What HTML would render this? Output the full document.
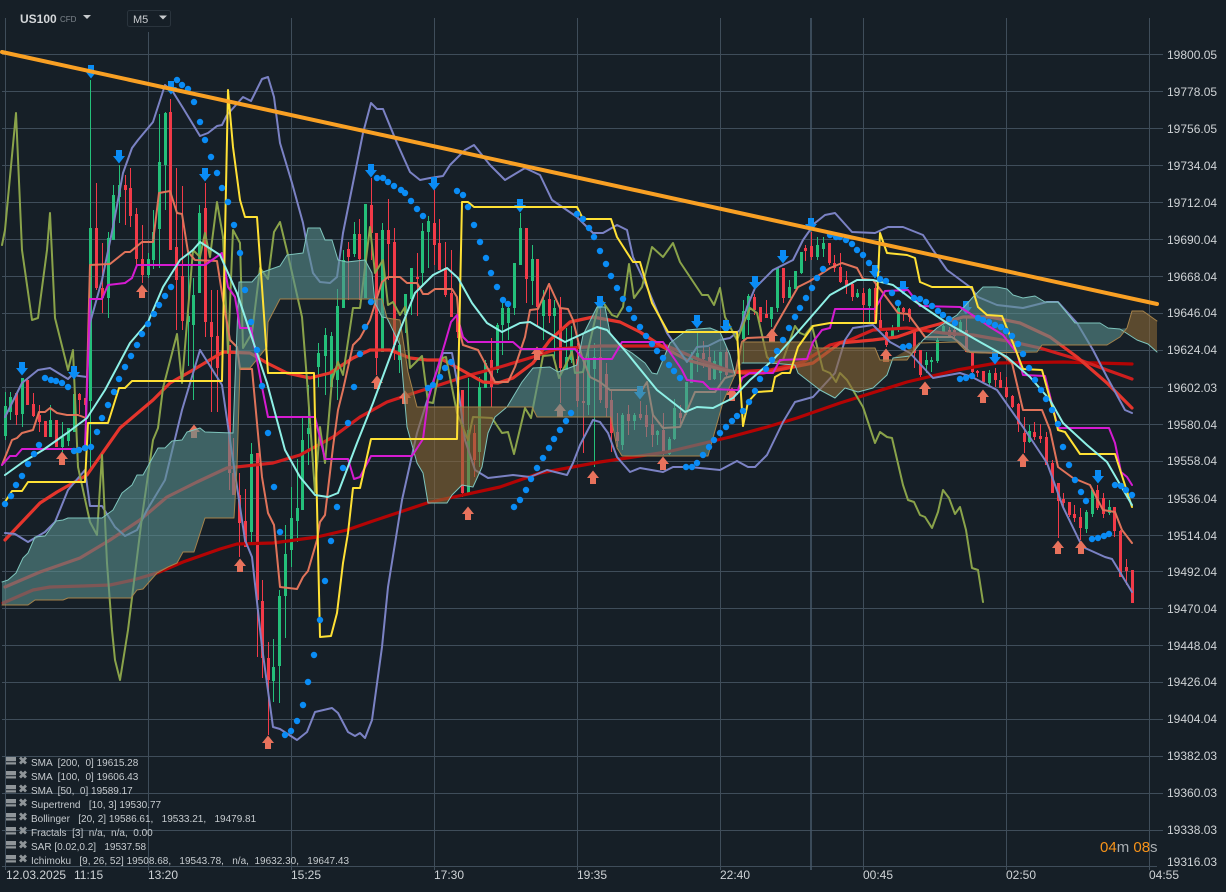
<!DOCTYPE html>
<html><head><meta charset="utf-8"><title>US100</title>
<style>
html,body{margin:0;padding:0;background:#161f27;width:1226px;height:892px;overflow:hidden}
svg{display:block;font-family:"Liberation Sans",sans-serif}
text{white-space:pre}
.l{fill:none;stroke-linejoin:round;stroke-linecap:round}
.ax{font-size:12px;fill:#cfd3d6}
.lg{font-size:10px;fill:#c6cbcf}
</style></head><body>
<svg width="1226" height="892" viewBox="0 0 1226 892" xmlns="http://www.w3.org/2000/svg">
<defs>
<path id="dn" d="M-3 -7h6v6h3l-6 7.500-6-7.500h3z" fill="#0a8cf5"/>
<path id="up" d="M-3 7h6v-6h3l-6-7.500-6 7.500h3z" fill="#e8725c"/>
<g id="ic"><path d="M6 0h10v4.200h-10zM6 5.200h10v2.300h-10z" fill="#8f9599"/><path d="M20 0.500l6 6M26 0.500l-6 6" stroke="#8f9599" stroke-width="2.800" fill="none"/></g>
</defs>
<rect width="1226" height="892" fill="#161f27"/>
<!-- grid -->
<path fill="none" stroke="#3f4d5a" stroke-width="1" d="M2 54.500H1163M2 91.500H1163M2 128.500H1163M2 165.500H1163M2 202.500H1163M2 239.500H1163M2 276.500H1163M2 313.500H1163M2 350.500H1163M2 387.500H1163M2 424.500H1163M2 461.500H1163M2 498.500H1163M2 535.500H1163M2 571.500H1163M2 608.500H1163M2 645.500H1163M2 682.500H1163M2 719.500H1163M2 756.500H1163M2 793.500H1163M2 830.500H1163M2 866.500H1157M5.500 18V870M148.500 32V870M291.500 18V870M434.500 18V870M577.500 18V870M720.500 18V870M863.500 18V870M1006.500 18V870M1149.500 18V870"/>
<path d="M811 18V870" stroke="#46586a" stroke-width="1.500" fill="none"/>
<!-- candles -->
<path fill="none" stroke="#24c07a" stroke-width="1" d="M5.500 392V440M10.500 392V420M22.500 378V427M50.500 405V437M62.500 422V452M68.500 428V446M74.500 383V432M90.500 80V470M108.500 232V318M113.500 185V240M119.500 165V223M148.500 253V278M153.500 210V269M159.500 114V268M165.500 112V210M188.500 250V366M193.500 278V400M199.500 205V293M251.500 443V545M273.500 639V702M279.500 590V703M285.500 525V638M291.500 487V567M297.500 459V542M302.500 418V510M308.500 385V465M318.500 343V387M325.500 328V395M331.500 332V390M337.500 289V400M343.500 250V308M354.500 222V257M365.500 204V298M382.500 223V352M399.500 338V373M405.500 294V333M411.500 268V315M422.500 223V285M428.500 216V268M468.500 378V493M479.500 377V467M485.500 360V388M497.500 323V373M502.500 303V355M508.500 305V340M514.500 263V315M520.500 213V265M532.500 245V305M543.500 290V340M554.500 300V363M566.500 328V370M571.500 326V363M588.500 345V415M594.500 343V467M622.500 413V450M634.500 413V430M657.500 430V445M669.500 437V455M674.500 399V440M686.500 382V415M691.500 352V383M697.500 331V372M714.500 351V380M720.500 352V380M743.500 300V363M748.500 294V335M771.500 307V327M777.500 268V312M789.500 280V298M795.500 271V289M801.500 252V274M817.500 237V260M823.500 237V257M857.500 289V298M869.500 288V323M892.500 325V338M898.500 302V332M926.500 352V373M931.500 357V372M937.500 338V363M943.500 325V333M960.500 320V335M989.500 370V387M1029.500 425V443M1086.500 510V533M1092.500 490V517M1109.500 500V515"/>
<path fill="none" stroke="#24c07a" stroke-width="3" d="M5.500 406V436M10.500 397V412M22.500 378V414M50.500 420V437M62.500 437V447M68.500 428V441M74.500 394V432M90.500 228V401M108.500 238V298M113.500 195V240M119.500 185V197M148.500 259V275M153.500 232V260M159.500 162V229M165.500 113V165M188.500 316V322M193.500 295V325M199.500 213V293M251.500 454V532M273.500 667V681M279.500 596V666M285.500 554V596M291.500 518V550M297.500 508V521M302.500 440V510M308.500 428V434M318.500 353V367M325.500 335V356M331.500 336V387M337.500 306V380M343.500 260V308M354.500 234V254M365.500 204V298M382.500 230V352M399.500 345V360M405.500 294V315M411.500 268V299M422.500 231V273M428.500 221V232M468.500 430V493M479.500 387V452M485.500 363V388M497.500 325V370M502.500 308V325M508.500 308V323M514.500 263V308M520.500 228V265M532.500 259V281M543.500 300V316M554.500 308V316M566.500 357V370M571.500 340V360M588.500 360V405M594.500 357V369M622.500 415V445M634.500 415V421M657.500 431V435M669.500 439V454M674.500 408V439M686.500 382V413M691.500 358V383M697.500 353V358M714.500 361V379M720.500 352V373M743.500 311V339M748.500 296V320M771.500 307V319M777.500 268V308M789.500 287V298M795.500 271V289M801.500 252V273M817.500 245V257M823.500 243V249M857.500 293V297M869.500 289V306M892.500 330V338M898.500 308V327M926.500 360V365M931.500 360V362M937.500 340V361M943.500 326V332M960.500 322V332M989.500 373V383M1029.500 431V442M1086.500 512V529M1092.500 490V514M1109.500 507V513"/>
<path fill="none" stroke="#f23a48" stroke-width="1" d="M16.500 393V425M27.500 378V405M33.500 393V417M39.500 405V432M45.500 421V437M56.500 420V447M79.500 393V414M85.500 398V418M96.500 183V290M102.500 243V313M125.500 175V225M130.500 168V227M136.500 208V268M142.500 225V283M170.500 99V250M176.500 168V330M182.500 186V330M205.500 183V337M211.500 290V412M217.500 290V412M229.500 345V490M233.500 438V495M239.500 473V557M245.500 489V547M257.500 453V657M262.500 580V678M268.500 642V735M348.500 242V300M359.500 219V300M371.500 178V260M376.500 233V375M388.500 199V280M394.500 228V360M417.500 253V316M434.500 190V265M439.500 219V270M445.500 242V297M451.500 250V317M457.500 310V338M462.500 390V497M474.500 425V477M491.500 338V407M526.500 228V303M537.500 259V327M549.500 283V323M560.500 297V403M577.500 343V407M583.500 357V453M600.500 305V403M606.500 363V417M611.500 390V452M617.500 413V447M628.500 405V435M640.500 401V420M646.500 405V437M652.500 413V447M663.500 413V455M680.500 405V427M703.500 341V368M709.500 347V380M726.500 347V377M754.500 294V315M760.500 307V322M766.500 300V318M783.500 268V303M805.500 245V261M811.500 232V260M829.500 243V265M834.500 255V272M840.500 253V283M846.500 271V294M852.500 283V301M863.500 288V322M875.500 283V323M880.500 300V328M886.500 328V347M903.500 307V321M909.500 308V322M914.500 328V368M920.500 350V377M949.500 327V338M954.500 327V338M966.500 317V352M972.500 352V377M977.500 370V377M983.500 371V383M995.500 368V387M1000.500 372V388M1006.500 377V398M1012.500 395V408M1018.500 403V432M1024.500 417V453M1034.500 422V440M1040.500 424V443M1046.500 432V465M1052.500 460V493M1058.500 483V538M1063.500 493V508M1069.500 502V517M1074.500 505V522M1080.500 508V540M1097.500 485V510M1103.500 493V518M1114.500 507V537M1120.500 530V577M1126.500 559V585M1132.500 570V603"/>
<path fill="none" stroke="#f23a48" stroke-width="3" d="M16.500 393V415M27.500 380V405M33.500 404V416M39.500 415V422M45.500 421V437M56.500 420V447M79.500 394V400M85.500 398V405M96.500 228V288M102.500 288V298M125.500 185V190M130.500 188V216M136.500 214V259M142.500 259V275M170.500 112V250M176.500 247V280M182.500 276V321M205.500 208V322M211.500 322V337M217.500 336V368M229.500 345V473M233.500 473V495M239.500 495V523M245.500 521V547M257.500 453V600M262.500 601V658M268.500 658V680M348.500 249V257M359.500 234V259M371.500 205V233M376.500 233V358M388.500 230V244M394.500 242V345M417.500 277V279M434.500 223V245M439.500 243V270M445.500 268V295M451.500 293V317M457.500 315V332M462.500 390V493M474.500 433V460M491.500 360V387M526.500 228V279M537.500 259V307M549.500 299V316M560.500 308V368M577.500 359V401M583.500 401V403M600.500 357V400M606.500 374V408M611.500 400V433M617.500 432V441M628.500 414V421M640.500 414V418M646.500 415V427M652.500 424V435M663.500 430V452M680.500 413V418M703.500 353V359M709.500 357V380M726.500 352V375M754.500 297V310M760.500 307V322M766.500 314V318M783.500 268V298M805.500 248V251M811.500 246V257M829.500 243V263M834.500 263V268M840.500 267V282M846.500 280V285M852.500 284V297M863.500 293V305M875.500 288V323M880.500 320V328M886.500 332V345M903.500 308V312M909.500 309V317M914.500 328V353M920.500 350V375M949.500 330V336M954.500 330V336M966.500 330V352M972.500 352V372M977.500 371V373M983.500 371V382M995.500 373V380M1000.500 380V388M1006.500 387V397M1012.500 396V407M1018.500 404V424M1024.500 433V442M1034.500 432V437M1040.500 436V439M1046.500 437V465M1052.500 463V493M1058.500 483V501M1063.500 499V503M1069.500 502V515M1074.500 514V518M1080.500 517V528M1097.500 490V508M1103.500 498V514M1114.500 507V531M1120.500 531V577M1126.500 567V571M1132.500 570V603"/>
<!-- SMA 200 -->
<polyline class="l" stroke="#b30404" stroke-width="3.200" points="3,603 33,590 50,587 83,586 110,585 133,580 157,573 183,562 220,549 237,544 273,543 317,537 347,530 370,522 400,512 427,503 440,500 500,487 540,473 600,462 667,452 730,437 767,427 797,418 840,403 907,382 957,370 997,363 1063,362 1132,364"/>
<!-- SMA 100 -->
<polyline class="l" stroke="#cf1e1e" stroke-width="3.200" points="5,587 40,572 80,558 110,540 140,520 167,497 197,482 227,468 273,463 300,455 333,437 360,417 387,402 417,392 433,387 470,375 500,367 533,357 557,349 600,346 667,346 700,360 733,372 770,370 803,362 830,345 850,340 873,330 907,328 943,333 973,335 1013,342 1040,348 1080,360 1107,370 1132,379"/>
<!-- SMA 50 -->
<polyline class="l" stroke="#e5352c" stroke-width="3.200" points="5,540 40,503 57,492 87,475 120,428 153,400 170,383 193,370 223,352 250,353 267,363 287,373 310,378 330,373 353,358 370,350 390,350 410,358 427,360 443,360 458,368 483,382 498,383 513,378 533,363 550,340 570,322 593,317 620,322 640,332 663,347 687,360 723,370 743,373 763,373 813,363 840,343 873,340 897,337 917,330 943,323 963,317 990,317 1020,323 1050,337 1077,357 1107,383 1132,408"/>
<!-- Bollinger -->
<g stroke="#7b82c4" stroke-width="2" class="l">
<polyline class="l" points="5,417 22,383 38,370 50,368 68,379 72,375 87,377 90,323 102,280 113,227 123,173 132,148 138,140 153,122 165,85 173,92 183,108 200,136 208,133 217,126 222,125 227,115 243,97 251,101 262,79 268,77 274,97 280,143 292,183 303,223 308,250 313,273 320,282 330,283 337,277 343,233 355,173 363,133 371,103 377,109 383,109 397,143 410,172 420,180 430,178 443,176 450,165 465,150 474,145 490,165 505,180 525,168 540,175 552,200 577,217 593,233 603,233 617,225 627,230 633,257 647,287 658,313 667,333 687,362 697,347 708,346 720,340 730,338 740,330 747,307 755,288 773,270 793,260 803,240 815,223 825,215 835,213 852,232 875,233 888,227 903,227 923,235 933,250 947,270 970,287 978,297 997,305 1023,308 1047,302 1058,302 1077,323 1093,350 1107,377 1125,410 1132,413"/>
<polyline class="l" points="5,533 15,534 28,542 45,532 55,522 68,490 85,470 90,506 102,506 115,527 125,536 137,530 147,510 165,480 182,410 200,350 222,385 230,440 245,540 252,557 262,647 273,727 280,729 297,740 307,732 315,712 332,708 338,713 348,732 355,736 360,733 365,738 372,720 382,647 388,587 402,500 417,433 432,385 443,353 452,353 458,387 465,440 475,470 488,478 513,475 530,477 547,470 567,475 573,463 580,445 593,420 600,422 608,433 617,457 630,472 640,468 663,472 673,467 690,467 720,470 737,461 748,467 755,467 767,455 783,422 795,402 813,397 835,373 845,340 853,328 873,325 890,342 910,353 933,378 960,373 972,377 997,390 1023,427 1047,463 1063,507 1080,542 1085,548 1105,557 1112,559 1132,592"/>
</g>
<!-- Chikou -->
<polyline class="l" stroke="#8aa34a" stroke-width="2" points="2,245 5,230 16,113 22,250 32,320 38,318 47,250 50,213 55,318 63,350 68,370 73,350 78,467 90,522 97,535 102,455 107,563 112,630 115,660 120,680 128,630 142,517 153,440 158,428 163,388 177,334 182,383 193,250 200,257 205,233 210,257 217,202 223,237 228,353 233,230 240,243 243,348 252,333 260,268 268,279 274,232 280,222 288,255 302,317 307,380 315,492 320,427 325,463 332,380 338,362 343,375 353,308 360,308 370,227 375,273 383,260 388,305 393,302 400,315 405,307 410,368 422,356 428,402 433,403 442,358 446,357 457,413 468,440 473,417 492,418 502,433 508,432 514,454 525,408 531,418 543,356 553,355 559,378 572,352 575,373 583,372 600,298 612,315 617,317 623,307 629,264 634,298 642,287 652,247 663,257 673,243 680,262 692,280 702,295 708,295 714,305 720,288 725,317 737,340 750,308 757,313 767,357 773,363 783,360 795,326 800,333 805,335 812,326 823,370 830,373 836,382 840,373 847,380 863,407 875,443 880,432 887,437 892,438 903,485 908,500 914,502 920,515 925,517 932,528 938,512 943,490 949,498 955,514 960,507 966,530 972,568 978,570 983,602"/>
<!-- Salmon -->
<polyline class="l" stroke="#e0735a" stroke-width="2" points="2,465 12,440 17,438 22,433 33,430 39,412 45,412 50,408 57,413 67,415 78,415 86,418 90,265 110,264 125,252 130,252 142,242 153,242 159,193 170,191 177,213 182,214 188,252 195,260 217,261 223,300 230,340 237,347 240,369 252,369 262,477 268,513 274,525 280,587 297,589 303,577 308,571 317,540 320,522 325,515 333,447 338,410 343,390 353,345 360,338 370,320 382,282 388,277 400,277 407,283 417,283 423,294 428,294 435,289 452,289 457,297 460,333 463,345 478,350 487,367 495,382 508,382 515,367 525,337 530,310 538,309 549,284 560,308 568,309 573,320 582,357 590,377 600,382 610,390 642,390 647,382 653,415 663,428 680,427 695,392 715,392 725,378 735,375 742,342 747,338 770,337 775,327 798,287 810,281 830,268 842,263 857,268 863,279 873,280 880,289 898,313 908,314 925,337 952,337 960,343 970,352 1000,353 1012,363 1023,410 1042,410 1050,430 1058,467 1073,478 1090,485 1103,510 1115,512 1122,530 1132,543"/>
<!-- arrows -->
<use href="#dn" x="91" y="72"/><use href="#dn" x="119" y="157"/><use href="#dn" x="171" y="88"/><use href="#dn" x="205" y="175"/><use href="#dn" x="371" y="171"/><use href="#dn" x="434" y="184"/><use href="#dn" x="520" y="206"/><use href="#dn" x="640" y="393"/><use href="#dn" x="697" y="322"/><use href="#dn" x="726" y="327"/><use href="#dn" x="755" y="283"/><use href="#dn" x="783" y="257"/><use href="#dn" x="811" y="225"/><use href="#dn" x="875" y="272"/><use href="#dn" x="966" y="308"/><use href="#dn" x="995" y="358"/><use href="#dn" x="1098" y="477"/><use href="#dn" x="903" y="288"/><use href="#dn" x="600" y="303"/><use href="#dn" x="22" y="369"/><use href="#dn" x="74" y="373"/>
<use href="#up" x="62" y="458"/><use href="#up" x="194" y="431"/><use href="#up" x="240" y="565"/><use href="#up" x="268" y="742"/><use href="#up" x="142" y="291"/><use href="#up" x="377" y="382"/><use href="#up" x="468" y="513"/><use href="#up" x="405" y="397"/><use href="#up" x="537" y="353"/><use href="#up" x="560" y="410"/><use href="#up" x="593" y="477"/><use href="#up" x="663" y="463"/><use href="#up" x="732" y="394"/><use href="#up" x="772" y="335"/><use href="#up" x="886" y="355"/><use href="#up" x="925" y="388"/><use href="#up" x="983" y="396"/><use href="#up" x="1023" y="460"/><use href="#up" x="1058" y="547"/><use href="#up" x="1081" y="547"/>
<!-- clouds -->
<polygon fill="rgb(90,143,142)" fill-opacity=".6" points="2,582 8,580 16,573 23,558 28,553 35,537 45,536 56,521 63,520 68,518 102,518 113,510 122,493 132,485 137,475 143,475 158,448 165,448 172,441 182,440 187,432 200,428 205,432 233,433 237,330 239,282 252,282 260,273 280,266 287,255 303,253 308,228 320,228 325,240 332,240 338,260 347,262 365,260 372,273 375,303 382,317 387,318 382,299 280,299 268,322 267,347 250,368 240,368 237,467 234,518 205,518 194,552 183,552 177,563 168,567 157,573 143,589 137,590 131,598 68,598 63,600 35,600 28,605 2,605"/>
<polygon fill="rgb(139,103,54)" fill-opacity=".6" points="382,300 387,318 400,320 408,372 417,407 507,407 495,417 488,433 482,467 473,487 462,485 452,495 447,503 428,503 423,473 417,463 407,427 400,345 387,318"/>
<polygon fill="rgb(90,143,142)" fill-opacity=".6" points="507,407 513,397 522,382 533,368 550,367 558,372 577,365 583,335 597,307 605,307 610,333 622,347 632,353 645,363 652,373 657,374 670,343 687,330 710,328 720,332 730,355 735,375 723,402 708,456 622,456 617,448 611,417 537,417 532,407"/>
<polygon fill="rgb(139,103,54)" fill-opacity=".6" points="735,375 742,342 812,342 815,348 875,348 880,360 907,360 919,343 923,341 893,358 887,375 873,388 858,392 845,388 835,398 820,390 807,380 798,373 795,365 770,363 742,363"/>
<polygon fill="rgb(90,143,142)" fill-opacity=".6" points="923,340 937,328 957,315 973,297 983,287 997,287 1007,289 1013,295 1023,298 1035,296 1045,302 1058,302 1075,323 1100,323 1108,328 1120,329 1127,328 1120,337 1107,345 1042,345 1037,352 983,353 967,352 957,342"/>
<polygon fill="rgb(139,103,54)" fill-opacity=".6" points="1120,334 1127,328 1132,311 1143,311 1157,321 1157,352 1148,344 1137,340 1122,330"/>
<g class="l" stroke="#7ec4bc" stroke-width="1" fill="none">
<polyline class="l" points="2,582 8,580 16,573 23,558 28,553 35,537 45,536 56,521 63,520 68,518 102,518 113,510 122,493 132,485 137,475 143,475 158,448 165,448 172,441 182,440 187,432 200,428 205,432 233,433 237,330 239,282 252,282 260,273 280,266 287,255 303,253 308,228 320,228 325,240 332,240 338,260 347,262 365,260 372,273 375,303 382,317 387,318 400,345 407,427 417,463 423,473 428,503 447,503 452,495 462,485 473,487 482,467 488,433 495,417 507,407 513,397 522,382 533,368 550,367 558,372 577,365 583,335 597,307 605,307 610,333 622,347 632,353 645,363 652,373 657,374 670,343 687,330 710,328 720,332 730,355 735,375"/>
<polyline class="l" points="742,363 770,363 795,365 798,373 807,380 820,390 835,398 845,388 858,392 873,388 887,375 893,358 910,356 923,340 937,328 957,315 973,297 983,287 997,287 1007,289 1013,295 1023,298 1035,296 1045,302 1058,302 1075,323 1100,323 1108,328 1120,329 1137,340 1148,344 1157,352"/>
</g>
<g class="l" stroke="#a5824a" stroke-width="1" fill="none">
<polyline class="l" points="2,605 28,605 35,600 63,600 68,598 131,598 137,590 143,589 157,573 168,567 177,563 183,552 194,552 205,518 234,518 237,467 240,368 250,368 267,347 268,322 280,299 382,299 387,318 400,320 408,372 417,407 532,407 537,417 611,417 617,448 622,456 708,456 723,402 735,375 742,342 812,342 815,348 875,348 880,360 907,360 919,343 957,342 967,352 983,353 1037,352 1042,345 1107,345 1120,337 1127,328 1132,311 1143,311 1157,321"/>
</g>
<!-- Magenta -->
<polyline class="l" stroke="#d51bd1" stroke-width="2" points="2,465 10,456 16,456 22,449 85,449 90,299 102,299 108,285 125,283 132,278 137,265 205,265 222,253 228,287 235,297 240,328 251,328 262,387 268,417 315,417 325,459 348,459 354,479 360,477 371,456 412,456 423,439 428,400 445,343 451,322 457,315 463,337 468,342 513,342 521,349 575,349 583,359 612,359 622,342 663,342 682,370 687,380 703,382 710,389 738,390 742,378 750,373 773,373 780,360 807,359 813,342 822,330 830,328 835,309 875,309 885,291 908,290 920,306 960,307 977,318 990,327 1003,335 1017,353 1023,375 1045,376 1058,428 1109,428 1115,443 1121,472 1127,477 1132,485"/>
<!-- Yellow -->
<polyline class="l" stroke="#ffe135" stroke-width="2" points="5,502 12,491 22,491 28,482 85,482 88,423 108,423 119,388 125,388 132,381 222,381 228,90 233,147 240,200 245,217 257,217 262,287 268,373 314,373 320,637 331,636 337,613 343,563 348,533 353,488 360,488 371,439 457,439 462,202 468,202 474,207 577,207 583,219 611,219 617,237 633,262 640,262 652,303 668,332 737,332 743,426 748,402 757,392 772,391 775,377 782,373 790,373 798,347 813,326 830,323 876,323 880,233 887,253 907,255 915,258 920,282 932,287 972,287 978,307 987,315 1002,316 1013,343 1023,369 1042,370 1055,417 1058,430 1065,432 1080,454 1115,454 1132,507"/>
<!-- Cyan -->
<polyline class="l" stroke="#8ef0e6" stroke-width="2" points="5,475 23,462 43,450 67,433 87,418 105,390 130,343 148,322 163,287 180,260 193,250 200,242 220,255 237,293 247,323 267,383 285,450 300,477 315,495 328,497 338,493 357,443 373,403 400,330 415,293 433,275 447,268 458,278 472,303 487,323 502,332 520,323 530,322 547,332 565,342 580,335 597,327 607,330 627,353 657,390 680,408 685,412 697,407 713,408 733,398 750,380 773,360 797,333 830,295 857,280 873,280 893,285 913,300 947,323 980,342 1007,357 1030,377 1050,400 1063,423 1087,445 1107,462 1132,505"/>
<!-- SAR -->
<path fill="none" stroke="#0a8cf5" stroke-width="6.400" stroke-linecap="round" d="M5 504h0M11 496h0M16 485h0M22 476h0M28 464h0M34 454h0M39 445h0M45 378h0M51 380h0M56 381h0M62 383h0M68 387h0M74 451h0M79 450h0M85 448h0M91 447h0M97 432h0M102 418h0M108 405h0M114 392h0M119 379h0M125 367h0M131 356h0M137 345h0M142 334h0M148 324h0M154 314h0M159 305h0M165 296h0M171 287h0M177 80h0M182 85h0M188 89h0M194 102h0M200 122h0M205 140h0M211 157h0M217 173h0M222 188h0M228 202h0M234 225h0M240 253h0M245 290h0M251 322h0M257 350h0M262 386h0M268 433h0M274 487h0M280 532h0M285 735h0M291 731h0M297 721h0M303 705h0M308 682h0M314 655h0M320 620h0M325 581h0M331 541h0M337 507h0M343 468h0M348 423h0M354 387h0M360 354h0M365 327h0M371 302h0M377 178h0M383 178h0M388 182h0M394 186h0M401 190h0M405 193h0M411 201h0M417 209h0M423 216h0M428 388h0M433 385h0M440 377h0M445 368h0M451 362h0M457 191h0M463 195h0M468 207h0M474 225h0M480 242h0M486 258h0M491 273h0M497 287h0M503 300h0M508 304h0M514 507h0M520 500h0M526 490h0M531 479h0M537 468h0M543 458h0M549 448h0M554 439h0M560 430h0M566 421h0M571 413h0M577 214h0M583 219h0M589 228h0M594 237h0M600 251h0M606 264h0M611 276h0M617 288h0M623 299h0M629 309h0M634 318h0M640 327h0M646 336h0M652 344h0M657 351h0M663 358h0M669 365h0M674 371h0M680 378h0M686 467h0M692 467h0M697 463h0M703 455h0M709 447h0M714 440h0M720 433h0M726 427h0M732 421h0M737 416h0M743 411h0M749 402h0M755 391h0M760 379h0M766 369h0M772 360h0M777 351h0M783 340h0M789 328h0M795 317h0M800 308h0M806 298h0M812 288h0M817 278h0M823 269h0M830 235h0M836 237h0M840 237h0M846 240h0M852 244h0M857 250h0M863 255h0M869 263h0M875 270h0M880 279h0M886 281h0M892 293h0M898 303h0M903 347h0M909 346h0M914 298h0M920 299h0M926 302h0M932 306h0M938 311h0M943 315h0M949 319h0M955 323h0M960 379h0M966 378h0M972 376h0M978 318h0M983 320h0M989 322h0M995 325h0M1001 327h0M1006 331h0M1012 336h0M1018 344h0M1023 354h0M1029 368h0M1035 380h0M1041 390h0M1046 399h0M1052 410h0M1058 424h0M1063 447h0M1069 465h0M1075 480h0M1081 492h0M1086 501h0M1092 539h0M1098 538h0M1104 536h0M1109 534h0M1115 485h0M1121 486h0M1126 490h0M1132 495h0"/>
<!-- trend -->
<line x1="2" y1="52" x2="1157" y2="304" stroke="#f9a024" stroke-width="4" stroke-linecap="round"/>
<!-- y axis -->
<g class="ax"><text x="1167" y="59">19800.05</text><text x="1167" y="96">19778.05</text><text x="1167" y="133">19756.05</text><text x="1167" y="170">19734.04</text><text x="1167" y="207">19712.04</text><text x="1167" y="244">19690.04</text><text x="1167" y="281">19668.04</text><text x="1167" y="317">19646.04</text><text x="1167" y="354">19624.04</text><text x="1167" y="392">19602.03</text><text x="1167" y="429">19580.04</text><text x="1167" y="465">19558.04</text><text x="1167" y="503">19536.04</text><text x="1167" y="540">19514.04</text><text x="1167" y="576">19492.04</text><text x="1167" y="613">19470.04</text><text x="1167" y="650">19448.04</text><text x="1167" y="686">19426.04</text><text x="1167" y="723">19404.04</text><text x="1167" y="760">19382.03</text><text x="1167" y="797">19360.03</text><text x="1167" y="834">19338.03</text><text x="1167" y="866">19316.03</text></g>
<!-- x axis -->
<g class="ax"><text x="6" y="879">12.03.2025</text><text x="74" y="879">11:15</text><text x="148" y="879">13:20</text><text x="291" y="879">15:25</text><text x="434" y="879">17:30</text><text x="577" y="879">19:35</text><text x="720" y="879">22:40</text><text x="863" y="879">00:45</text><text x="1006" y="879">02:50</text><text x="1149" y="879">04:55</text></g>
<!-- timer -->
<text x="1100" y="852" font-size="15" fill="#f7931a">04<tspan fill="#a9aeb2">m </tspan>08<tspan fill="#a9aeb2">s</tspan></text>
<!-- legend -->
<g transform="translate(0,757)"><use href="#ic"/></g><g transform="translate(0,771)"><use href="#ic"/></g><g transform="translate(0,785)"><use href="#ic"/></g><g transform="translate(0,799)"><use href="#ic"/></g><g transform="translate(0,813)"><use href="#ic"/></g><g transform="translate(0,827)"><use href="#ic"/></g><g transform="translate(0,841)"><use href="#ic"/></g><g transform="translate(0,855)"><use href="#ic"/></g>
<g class="lg"><text x="31" y="766">SMA  [200,  0] 19615.28</text><text x="31" y="780">SMA  [100,  0] 19606.43</text><text x="31" y="794">SMA  [50,  0] 19589.17</text><text x="31" y="808">Supertrend   [10, 3] 19530.77</text><text x="31" y="822">Bollinger   [20, 2] 19586.61,   19533.21,   19479.81</text><text x="31" y="836">Fractals  [3]  n/a,  n/a,  0.00</text><text x="31" y="850">SAR [0.02,0.2]   19537.58</text><text x="31" y="864">Ichimoku   [9, 26, 52] 19508.68,   19543.78,   n/a,  19632.30,   19647.43</text></g>
<!-- header -->
<text x="20" y="23" font-size="12" font-weight="700" fill="#d4d7da">US100</text>
<text x="60" y="22" font-size="8" fill="#7e868d">CFD</text>
<path d="M83 15h8l-4 4z" fill="#c8cbce"/>
<rect x="127.500" y="10.500" width="43" height="16" rx="2" fill="#161f27" stroke="#2a343d"/>
<text x="133" y="23" font-size="11" fill="#c8cbce">M5</text>
<path d="M159 15.500h8l-4 4z" fill="#c8cbce"/>
</svg>
</body></html>
